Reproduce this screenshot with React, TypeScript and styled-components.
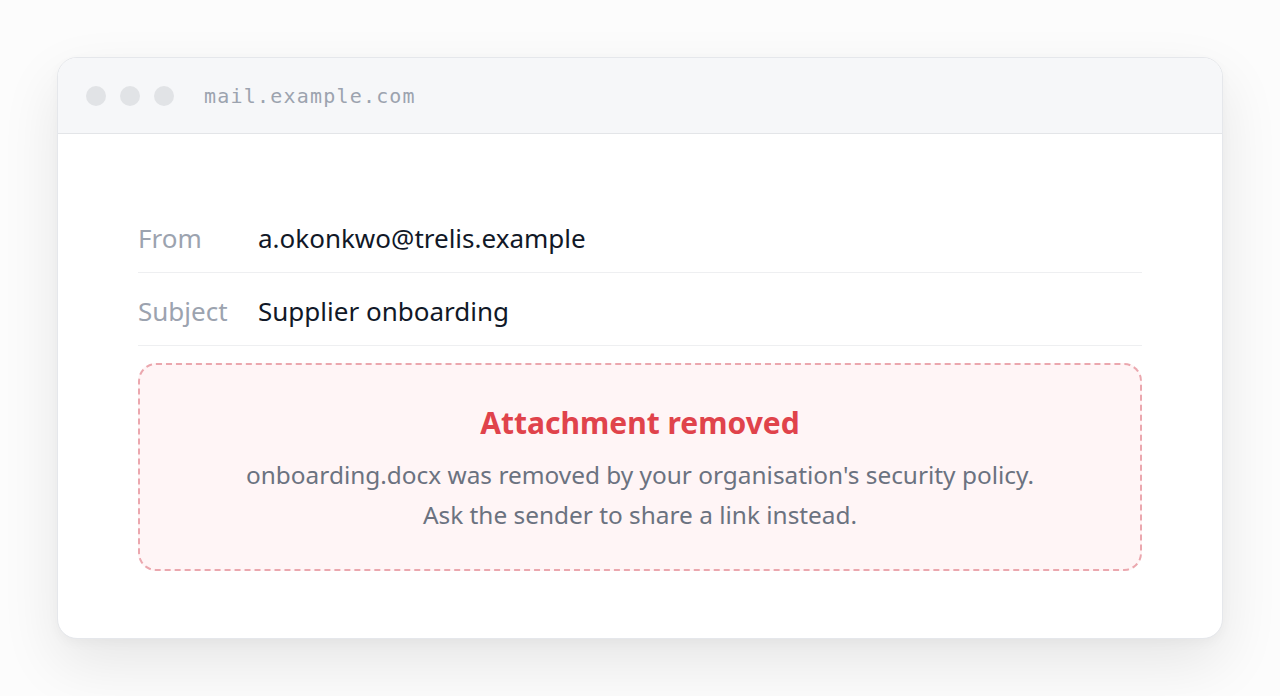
import React from "react";
import styled, { createGlobalStyle } from "styled-components";

const Global = createGlobalStyle`
  html, body { margin: 0; padding: 0; background: #fcfcfc; }
  * { box-sizing: border-box; }
  body { font-family: "Noto Sans", "Open Sans", sans-serif; }
`;

const Page = styled.div`
  width: 1280px;
  height: 696px;
  padding: 57px 57px 57px;
  background: #fcfcfc;
`;

const Window = styled.div`
  height: 582px;
  background: #ffffff;
  border: 1px solid #e5e7eb;
  border-radius: 20px;
  overflow: hidden;
  box-shadow: 0 24px 60px rgba(0, 0, 0, 0.09), 0 4px 12px rgba(0, 0, 0, 0.03);
  display: flex;
  flex-direction: column;
`;

const TitleBar = styled.div`
  height: 76px;
  flex: none;
  background: #f6f7f9;
  border-bottom: 1px solid #e3e5e8;
  display: flex;
  align-items: center;
  padding: 0 0 0 28px;
`;

const Dots = styled.div`
  display: flex;
  gap: 14px;
  margin-right: 30px;
`;

const Dot = styled.span`
  width: 20px;
  height: 20px;
  border-radius: 50%;
  background: #e1e3e6;
`;

const Url = styled.span`
  font-family: "DejaVu Sans Mono", "Liberation Mono", monospace;
  font-size: 20px;
  letter-spacing: 1.2px;
  color: #9ca3af;
`;

const Body = styled.div`
  padding: 66px 80px 0;
  display: flex;
  flex-direction: column;
`;

const Row = styled.div`
  height: 73px;
  display: flex;
  align-items: center;
  padding-top: 4px;
  border-bottom: 1px solid #eeeff1;
  font-size: 26px;
`;

const Label = styled.span`
  width: 120px;
  color: #9ca3af;
`;

const Value = styled.span`
  color: #111827;
`;

const Notice = styled.div`
  margin-top: 17px;
  height: 208px;
  border: 2px dashed #eba7ae;
  border-radius: 18px;
  background: #fff5f6;
  display: flex;
  flex-direction: column;
  align-items: center;
  padding-top: 36px;
  text-align: center;
`;

const NoticeTitle = styled.div`
  font-size: 30px;
  font-weight: 700;
  color: #e0434b;
  line-height: 44px;
  margin-bottom: 10px;
`;

const NoticeText = styled.div`
  font-size: 24.4px;
  line-height: 40px;
  color: #6b7280;
`;

export default function App() {
  return (
    <Page>
      <Global />
      <Window>
        <TitleBar>
          <Dots>
            <Dot />
            <Dot />
            <Dot />
          </Dots>
          <Url>mail.example.com</Url>
        </TitleBar>
        <Body>
          <Row>
            <Label>From</Label>
            <Value>a.okonkwo@trelis.example</Value>
          </Row>
          <Row>
            <Label>Subject</Label>
            <Value>Supplier onboarding</Value>
          </Row>
          <Notice>
            <NoticeTitle>Attachment removed</NoticeTitle>
            <NoticeText>
              onboarding.docx was removed by your organisation's security policy.
              <br />
              Ask the sender to share a link instead.
            </NoticeText>
          </Notice>
        </Body>
      </Window>
    </Page>
  );
}
